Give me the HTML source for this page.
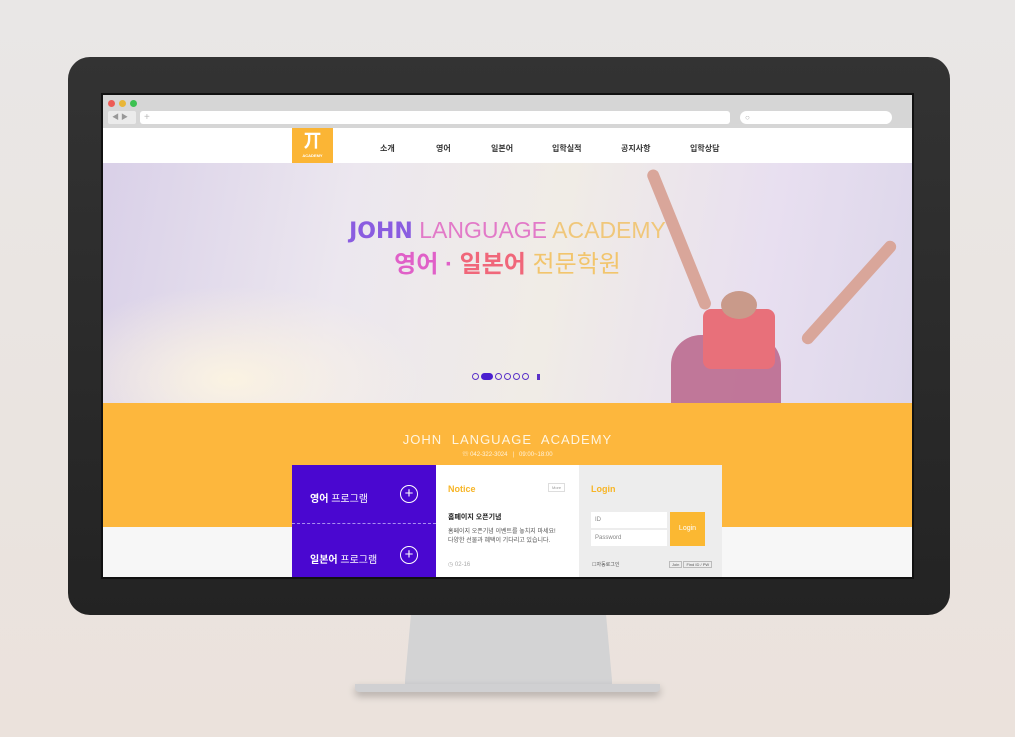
<!DOCTYPE html>
<html><head><meta charset="utf-8"><style>
*{margin:0;padding:0;box-sizing:border-box}
body{width:1015px;height:737px;overflow:hidden;background:linear-gradient(180deg,#e9e7e6,#ebe2dc);font-family:"Liberation Sans","Noto Sans CJK KR",sans-serif;position:relative}
.a{position:absolute}
</style></head><body>
<!-- stand -->
<div class="a" style="left:405px;top:612px;width:207px;height:80px;background:#d3d3d4;clip-path:polygon(3% 0,97% 0,100% 85%,130% 100%,-30% 100%,0 85%)"></div>
<div class="a" style="left:355px;top:684px;width:305px;height:8px;background:#d0d0d2;border-radius:0 0 4px 4px;box-shadow:0 4px 8px rgba(0,0,0,.25)"></div>
<!-- monitor -->
<div class="a" style="left:68px;top:57px;width:882px;height:558px;background:linear-gradient(180deg,#333,#232323);border-radius:22px"></div>
<div class="a" style="left:101px;top:93px;width:813px;height:486px;background:#111"></div>
<div class="a" style="left:103px;top:95px;width:809px;height:482px;overflow:hidden;background:#f7f7f7">
 <!-- chrome -->
 <div class="a" style="left:0;top:0;width:809px;height:33px;background:#d6d6d6"></div>
 <div class="a" style="left:5px;top:5px;width:7px;height:7px;border-radius:50%;background:#ed5b55"></div>
 <div class="a" style="left:16px;top:5px;width:7px;height:7px;border-radius:50%;background:#e9b637"></div>
 <div class="a" style="left:27px;top:5px;width:7px;height:7px;border-radius:50%;background:#3dc152"></div>
 <div class="a" style="left:5px;top:16px;width:28px;height:13px;background:#ebebeb;border-radius:2px;font-size:7px;color:#999;line-height:13px;padding-left:4px">◀ ▶</div>
 <div class="a" style="left:37px;top:16px;width:590px;height:13px;background:#fff;border-radius:3px;font-size:10px;color:#bbb;line-height:13px;padding-left:4px">+</div>
 <div class="a" style="left:637px;top:16px;width:152px;height:13px;background:#fff;border-radius:7px;font-size:8px;color:#aaa;line-height:13px;padding-left:5px">○</div>
 <!-- nav -->
 <div class="a" style="left:0;top:33px;width:809px;height:35px;background:#fff"></div>
 <div class="a" style="left:189px;top:33px;width:41px;height:35px;background:#fbb535;color:#fff;text-align:center;font-size:18px;font-weight:bold;line-height:26px">丌<div style="font-size:4px;line-height:4px">ACADEMY</div></div>
 <div class="a" style="top:48px;left:0;width:809px;font-size:8px;font-weight:bold;color:#333">
  <span class="a" style="left:277px">소개</span><span class="a" style="left:333px">영어</span><span class="a" style="left:388px">일본어</span><span class="a" style="left:449px">입학실적</span><span class="a" style="left:518px">공지사항</span><span class="a" style="left:587px">입학상담</span>
 </div>
 <!-- hero -->
 <div class="a" style="left:0;top:68px;width:809px;height:240px;background:linear-gradient(100deg,#d9d0e8 0%,#ece7ef 30%,#f0ece6 55%,#e8dff0 80%,#dcd6ea 100%)"></div>
 <div class="a" style="left:0;top:190px;width:320px;height:118px;background:radial-gradient(ellipse at 40% 80%,#fbf3e2,transparent 70%)"></div>
 <div class="a" style="left:568px;top:240px;width:110px;height:68px;background:#b9648a;border-radius:30px 30px 0 0;opacity:.85"></div>
 <div class="a" style="left:600px;top:214px;width:72px;height:60px;background:#e8707a;border-radius:8px"></div>
 <div class="a" style="left:618px;top:196px;width:36px;height:28px;background:#c99a8a;border-radius:50%"></div>
 <div class="a" style="left:542px;top:75px;width:12px;height:150px;background:#d9a69a;transform:rotate(-22deg);transform-origin:top;border-radius:6px"></div>
 <div class="a" style="left:740px;top:130px;width:12px;height:135px;background:#d9a69a;transform:rotate(42deg);border-radius:6px"></div>
 <div class="a" style="left:0;top:122px;width:809px;text-align:center;font-size:23px;letter-spacing:0"><b style="color:#8a5ce0;font-family:'DejaVu Sans',sans-serif;font-size:22px">JOHN</b> <span style="color:#e27ac8">LANGUAGE</span> <span style="color:#f0c77a">ACADEMY</span></div>
 <div class="a" style="left:0;top:149px;width:809px;text-align:center;font-size:24px"><b style="color:#e060c8">영어 · </b><b style="color:#f0677a">일본어</b> <span style="color:#f2c56c">전문학원</span></div>
 <div class="a" style="left:369px;top:278px;font-size:0">
  <span style="display:inline-block;width:7px;height:7px;border:1px solid #5a32c8;border-radius:50%;margin-right:2px"></span><span style="display:inline-block;width:12px;height:7px;background:#4a1fcf;border-radius:4px;margin-right:2px"></span><span style="display:inline-block;width:7px;height:7px;border:1px solid #5a32c8;border-radius:50%;margin-right:2px"></span><span style="display:inline-block;width:7px;height:7px;border:1px solid #5a32c8;border-radius:50%;margin-right:2px"></span><span style="display:inline-block;width:7px;height:7px;border:1px solid #5a32c8;border-radius:50%;margin-right:2px"></span><span style="display:inline-block;width:7px;height:7px;border:1px solid #5a32c8;border-radius:50%;margin-right:8px"></span><span style="display:inline-block;width:3px;height:6px;background:#5a32c8"></span>
 </div>
 <!-- orange -->
 <div class="a" style="left:0;top:308px;width:809px;height:124px;background:#fdb73d"></div>
 <div class="a" style="left:0;top:337px;width:809px;text-align:center;color:#fff5e0;font-size:13px;letter-spacing:1px;word-spacing:5px">JOHN LANGUAGE ACADEMY</div>
 <div class="a" style="left:0;top:354px;width:809px;text-align:center;color:#fff3dd;font-size:6px">☏ 042-322-3024 &nbsp; | &nbsp; 09:00~18:00</div>
 <!-- boxes -->
 <div class="a" style="left:189px;top:370px;width:144px;height:112px;background:#4a07d0;color:#fff;font-size:10px;font-weight:bold">
  <div class="a" style="left:18px;top:25px">영어 <span style="font-weight:normal">프로그램</span></div>
  <div class="a" style="left:108px;top:20px;width:18px;height:18px;border:1px solid #fff;border-radius:50%;text-align:center;line-height:15px;font-weight:normal;font-size:15px">+</div>
  <div class="a" style="left:0;top:58px;width:144px;border-top:1px dashed #a88ff0"></div>
  <div class="a" style="left:18px;top:86px">일본어 <span style="font-weight:normal">프로그램</span></div>
  <div class="a" style="left:108px;top:81px;width:18px;height:18px;border:1px solid #fff;border-radius:50%;text-align:center;line-height:15px;font-weight:normal;font-size:15px">+</div>
 </div>
 <div class="a" style="left:333px;top:370px;width:143px;height:112px;background:#fff">
  <div class="a" style="left:12px;top:19px;color:#f7b526;font-weight:bold;font-size:9px">Notice</div>
  <div class="a" style="left:112px;top:18px;border:1px solid #ddd;font-size:4px;color:#999;padding:1px 3px">More</div>
  <div class="a" style="left:12px;top:47px;color:#222;font-weight:bold;font-size:7px">홈페이지 오픈기념</div>
  <div class="a" style="left:12px;top:63px;color:#555;font-size:6px;line-height:9px">홈페이지 오픈기념 이벤트를 놓치지 마세요!<br>다양한 선물과 혜택이 기다리고 있습니다.</div>
  <div class="a" style="left:12px;top:96px;color:#aaa;font-size:6px">◷ 02-16</div>
 </div>
 <div class="a" style="left:476px;top:370px;width:143px;height:112px;background:#ededed">
  <div class="a" style="left:12px;top:19px;color:#f7b526;font-weight:bold;font-size:9px">Login</div>
  <div class="a" style="left:12px;top:47px;width:76px;height:16px;background:#fff;font-size:6px;color:#888;padding:5px 4px">ID</div>
  <div class="a" style="left:12px;top:65px;width:76px;height:16px;background:#fff;font-size:6px;color:#888;padding:5px 4px">Password</div>
  <div class="a" style="left:91px;top:47px;width:35px;height:34px;background:#fbb832;color:#fff;font-size:7px;text-align:center;line-height:34px">Login</div>
  <div class="a" style="left:13px;top:96px;font-size:5px;color:#555">☐자동로그인</div>
  <div class="a" style="left:90px;top:97px;font-size:4px;color:#555"><span style="border:1px solid #bbb;padding:0 2px">Join</span> <span style="border:1px solid #bbb;padding:0 2px">Find ID / PW</span></div>
 </div>
</div>
</body></html>
